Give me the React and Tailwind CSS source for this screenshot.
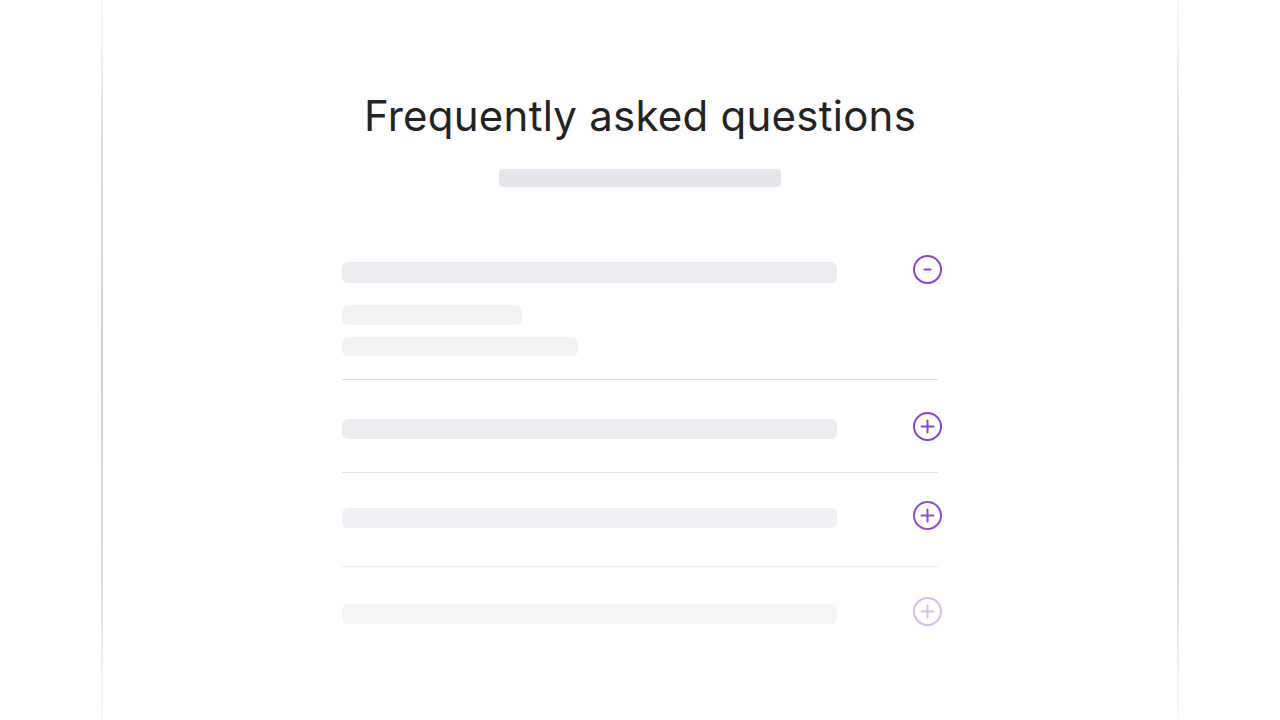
import React from 'react';

const Line = () => (
  <div className="w-[2px] h-full bg-[linear-gradient(to_bottom,#fafafa_0%,#dcdcdc_20%,#d2d2d2_50%,#dcdcdc_80%,#fafafa_100%)]" />
);

const ToggleIcon = ({ open, color }) => (
  <svg width="31" height="31" viewBox="0 0 31 31" fill="none" stroke={color} strokeWidth="2" strokeLinecap="round">
    <circle cx="15.5" cy="15.5" r="13.5" />
    {open ? (
      <line x1="12.5" y1="15.5" x2="18.5" y2="15.5" />
    ) : (
      <>
        <line x1="9.5" y1="15.5" x2="21.5" y2="15.5" />
        <line x1="15.5" y1="9.5" x2="15.5" y2="21.5" />
      </>
    )}
  </svg>
);

const rows = [
  { bar: 'bg-[#ebecf0]', icon: '#8a44d4', pt: 'pt-[39px]', pb: 'pb-[33px]', border: 'border-[#e3e3e6]' },
  { bar: 'bg-[#eff0f3]', icon: '#8f4cd8', pt: 'pt-[35px]', pb: 'pb-[38px]', border: 'border-[#ececee]' },
  { bar: 'bg-[#f5f5f7]', icon: '#d6bdf1', pt: 'pt-[37px]', pb: 'pb-[20px]', border: 'border-transparent' },
];

export default function App() {
  return (
    <div className="w-[1280px] h-[720px] bg-white flex justify-center overflow-hidden" style={{ fontFamily: 'Inter, "Noto Sans", sans-serif' }}>
      <div className="w-[101px]" />
      <Line />
      <div className="flex-1 flex flex-col items-center">
        <h1 className="mt-[91px] text-[42px] leading-[50px] text-[#232323] font-normal tracking-[0.25px]">
          Frequently asked questions
        </h1>
        <div className="mt-[28px] w-[282px] h-[18px] rounded bg-[#e5e6eb]" />

        <div className="mt-[75px] w-[596px] flex flex-col">
          {/* open item */}
          <div className="border-b border-[#dedee1] pb-[23px]">
            <div className="h-[21px] flex items-center justify-between">
              <div className="w-[495px] h-[21px] rounded-md bg-[#ebecf0]" />
              <div className="-mr-[5px] -mt-[7px]">
                <ToggleIcon open color="#8a44d4" />
              </div>
            </div>
            <div className="mt-[22px] w-[180px] h-[20px] rounded-md bg-[#f2f3f5]" />
            <div className="mt-[12px] w-[236px] h-[19px] rounded-md bg-[#f2f3f5]" />
          </div>

          {rows.map((r, i) => (
            <div key={i} className={`border-b ${r.border} ${r.pt} ${r.pb}`}>
              <div className="h-[20px] flex items-center justify-between">
                <div className={`w-[495px] h-[20px] rounded-md ${r.bar}`} />
                <div className="-mr-[5px] -mt-[5px]">
                  <ToggleIcon color={r.icon} />
                </div>
              </div>
            </div>
          ))}
        </div>
      </div>
      <Line />
      <div className="w-[101px]" />
    </div>
  );
}
